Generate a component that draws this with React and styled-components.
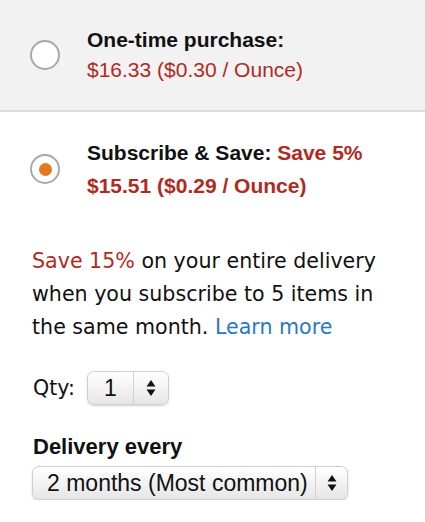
import React from 'react';
import styled, { createGlobalStyle } from 'styled-components';

const GlobalStyle = createGlobalStyle`
  body {
    margin: 0;
    background: #ffffff;
    font-family: 'Liberation Sans', Arial, sans-serif;
    color: #111111;
  }
`;

const Page = styled.div`
  width: 425px;
  display: flex;
  flex-direction: column;
`;

const OptionPanel = styled.div`
  display: flex;
  align-items: center;
  gap: 27px;
  padding: ${(p) => p.$padY}px 0 ${(p) => p.$padY}px 30px;
  background: ${(p) => (p.$shaded ? '#f2f2f2' : '#ffffff')};
  border-bottom: ${(p) => (p.$shaded ? '2px solid #dedede' : 'none')};
`;

const Radio = styled.span`
  width: 30px;
  height: 30px;
  flex: none;
  box-sizing: border-box;
  border-radius: 50%;
  border: 2px solid #a8a8a8;
  background: #ffffff;
  display: flex;
  align-items: center;
  justify-content: center;

  &::after {
    content: '';
    display: ${(p) => (p.$checked ? 'block' : 'none')};
    width: 13px;
    height: 13px;
    border-radius: 50%;
    background: #e8781e;
  }
`;

const OptionText = styled.div`
  display: flex;
  flex-direction: column;
  font-size: 21px;
  line-height: ${(p) => p.$lh}px;
`;

const Title = styled.span`
  font-weight: bold;
  color: #111111;
`;

const Red = styled.span`
  color: #b12a22;
  font-weight: ${(p) => (p.$bold ? 'bold' : 'normal')};
`;

const Promo = styled.p`
  width: 360px;
  margin: 19px 0 0 0;
  padding: 0 0 0 32px;
  font-family: 'DejaVu Sans', Verdana, sans-serif;
  font-size: 20.6px;
  line-height: 33px;
  color: #111111;
`;

const LearnMore = styled.a`
  color: #2a78c2;
  text-decoration: none;
`;

const QtyRow = styled.div`
  display: flex;
  align-items: center;
  gap: 12px;
  margin: 27px 0 0 33px;
`;

const QtyLabel = styled.span`
  font-family: 'DejaVu Sans', Verdana, sans-serif;
  font-size: 20.6px;
`;

const Select = styled.div`
  display: flex;
  align-items: stretch;
  width: ${(p) => p.$width}px;
  height: 34px;
  box-sizing: border-box;
  border: 1px solid #cfcfcf;
  border-radius: 7px;
  background: linear-gradient(#ffffff, #f4f4f4 45%, #e6e6e6);
  box-shadow: 0 1px 2px rgba(0, 0, 0, 0.18);
  font-size: 23px;
  color: #111111;
`;

const SelectValue = styled.span`
  flex: 1;
  display: flex;
  align-items: center;
  justify-content: ${(p) => (p.$center ? 'center' : 'flex-start')};
  padding-left: ${(p) => p.$pad || 0}px;
  border-right: 1px solid #d2d2d2;
`;

const ArrowBox = styled.span`
  width: ${(p) => p.$w}px;
  display: flex;
  align-items: center;
  justify-content: center;
`;

const DeliveryLabel = styled.div`
  margin: 29px 0 0 33px;
  font-size: 22px;
  font-weight: bold;
  line-height: 26px;
`;

const DeliverySelect = styled.div`
  margin: 6px 0 0 32px;
`;

const Arrows = () => (
  <svg width="10" height="18" viewBox="0 0 10 18">
    <path d="M5 1 L9.5 7.5 L0.5 7.5 Z" fill="#111" />
    <path d="M5 17 L9.5 10.5 L0.5 10.5 Z" fill="#111" />
  </svg>
);

const App = () => (
  <Page>
    <GlobalStyle />
    <OptionPanel $shaded $padY={25}>
      <Radio />
      <OptionText $lh={30}>
        <Title>One-time purchase:</Title>
        <Red>$16.33 ($0.30 / Ounce)</Red>
      </OptionText>
    </OptionPanel>
    <OptionPanel $padY={24}>
      <Radio $checked />
      <OptionText $lh={33}>
        <span>
          <Title>Subscribe &amp; Save: </Title>
          <Red $bold>Save 5%</Red>
        </span>
        <Red $bold>$15.51 ($0.29 / Ounce)</Red>
      </OptionText>
    </OptionPanel>
    <Promo>
      <Red>Save 15%</Red> on your entire delivery when you subscribe to 5 items in the same month.{' '}
      <LearnMore href="#">Learn more</LearnMore>
    </Promo>
    <QtyRow>
      <QtyLabel>Qty:</QtyLabel>
      <Select $width={82}>
        <SelectValue $center>1</SelectValue>
        <ArrowBox $w={34}>
          <Arrows />
        </ArrowBox>
      </Select>
    </QtyRow>
    <DeliveryLabel>Delivery every</DeliveryLabel>
    <DeliverySelect>
      <Select $width={316}>
        <SelectValue $pad={14}>2 months (Most common)</SelectValue>
        <ArrowBox $w={31}>
          <Arrows />
        </ArrowBox>
      </Select>
    </DeliverySelect>
  </Page>
);

export default App;
